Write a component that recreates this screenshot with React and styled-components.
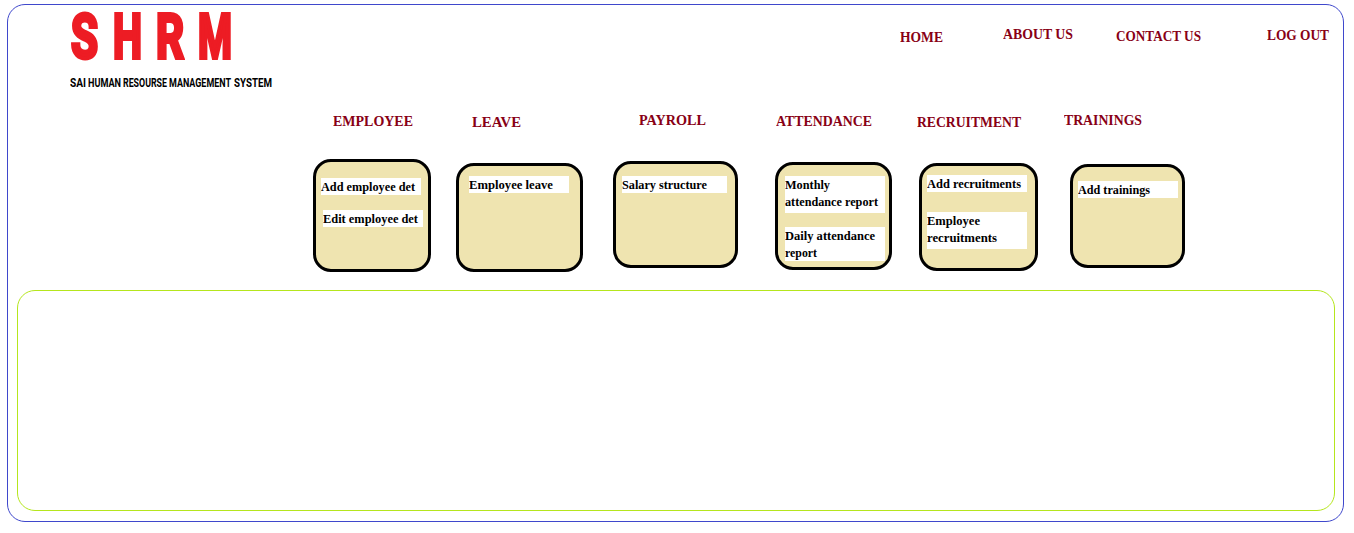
import React, { useLayoutEffect, useRef } from "react";
import styled, { createGlobalStyle } from "styled-components";

const GlobalStyle = createGlobalStyle`
  * { box-sizing: border-box; }
  body { margin: 0; background: #fff; overflow: hidden; }
`;

const Page = styled.div`
  height: 533px;
  padding: 4px 10px 11px 7px;
`;

const Frame = styled.div`
  display: flex;
  flex-direction: column;
  width: 1337px;
  height: 518px;
  border: 1px solid #3f48cc;
  border-radius: 18px;
`;

const Header = styled.header`
  display: flex;
  flex: none;
  height: 108px;
`;

const Brand = styled.div`
  width: 820px;
  flex: none;
  padding-left: 62px;
`;

const Row = styled.div`
  display: flex;
`;

const Slot = styled.div`
  flex: none;
  width: ${(p) => p.$width}px;
  margin-left: ${(p) => p.$gap || 0}px;
  margin-top: ${(p) => p.$drop || 0}px;
`;

const Logo = styled(Row)`
  padding-left: 1px;
  height: 70px;
  font: bold 62px/64px Roboto, "Liberation Sans", sans-serif;
  color: #ed1c24;
  -webkit-text-stroke: 4px #ed1c24;
`;

const Tagline = styled(Row)`
  font: bold 13px/15px Roboto, "Liberation Sans", sans-serif;
  color: #000;
`;

const Nav = styled.nav`
  display: flex;
  padding-top: 21px;
  padding-left: 72px;
  font: bold 15px/17px "Liberation Serif", "Times New Roman", serif;
  color: #880015;
`;

const Modules = styled.main`
  display: flex;
  flex: none;
  height: 177px;
  padding-left: 305px;
`;

const Module = styled.section`
  flex: none;
  width: ${(p) => p.$width}px;
  margin-left: ${(p) => p.$gap}px;
`;

const Heading = styled.h2`
  margin: ${(p) => p.$drop}px 0 0 ${(p) => p.$indent}px;
  height: ${(p) => 46 - p.$drop}px;
  font: bold 15px/17px "Liberation Serif", "Times New Roman", serif;
  color: #880015;
`;

const Card = styled.div`
  height: ${(p) => p.$height}px;
  margin-top: ${(p) => p.$drop}px;
  padding-top: ${(p) => p.$pad}px;
  border: 3px solid #000;
  border-radius: 18px;
  background: #efe4b0;
`;

const Entry = styled.div`
  width: ${(p) => p.$width || 100}px;
  height: ${(p) => p.$height || 17}px;
  margin-left: ${(p) => p.$indent}px;
  margin-bottom: ${(p) => p.$after || 0}px;
  background: #fff;
  font: bold 13px/17px "Liberation Serif", "Times New Roman", serif;
  color: #000;
`;

const Content = styled.div`
  flex: none;
  width: 1318px;
  height: 221px;
  margin-left: 9px;
  border: 1px solid #b5e61d;
  border-radius: 18px;
`;

const Line = styled.span`
  display: block;
  width: max-content;
  white-space: nowrap;
  transform-origin: 0 0;
`;

// Condenses a line of text to the given width.
function Fit({ width, children }) {
  const ref = useRef(null);
  useLayoutEffect(() => {
    const el = ref.current;
    el.style.transform = "none";
    el.style.transform = `scaleX(${width / el.getBoundingClientRect().width})`;
  }, [width, children]);
  return <Line ref={ref}>{children}</Line>;
}

const letters = [
  { text: "S", width: 27, gap: 0 },
  { text: "H", width: 29, gap: 15 },
  { text: "R", width: 28, gap: 14 },
  { text: "M", width: 34, gap: 14 },
];

const words = [
  { text: "SAI", width: 16, gap: 0 },
  { text: "HUMAN", width: 33, gap: 2 },
  { text: "RESOURSE", width: 44, gap: 2 },
  { text: "MANAGEMENT", width: 62, gap: 2 },
  { text: "SYSTEM", width: 38, gap: 3 },
];

const links = [
  { text: "HOME", width: 43, gap: 0, drop: 3 },
  { text: "ABOUT US", width: 70, gap: 60, drop: 0 },
  { text: "CONTACT US", width: 85, gap: 43, drop: 2 },
  { text: "LOG OUT", width: 62, gap: 66, drop: 1 },
];

const modules = [
  {
    title: "EMPLOYEE", titleWidth: 80, indent: 20, titleDrop: 0, gap: 0, width: 118, drop: 0, height: 113, pad: 16,
    entries: [
      { indent: 5, after: 15, lines: [["Add employee det", 94]] },
      { indent: 7, lines: [["Edit employee det", 95]] },
    ],
  },
  {
    title: "LEAVE", titleWidth: 49, indent: 16, titleDrop: 1, gap: 25, width: 127, drop: 4, height: 109, pad: 10,
    entries: [{ indent: 10, lines: [["Employee leave", 84]] }],
  },
  {
    title: "PAYROLL", titleWidth: 67, indent: 26, titleDrop: -1, gap: 30, width: 125, drop: 2, height: 107, pad: 12,
    entries: [{ indent: 6, width: 105, lines: [["Salary structure", 85]] }],
  },
  {
    title: "ATTENDANCE", titleWidth: 96, indent: 1, titleDrop: 0, gap: 37, width: 117, drop: 3, height: 108, pad: 11,
    entries: [
      { indent: 7, height: 37, after: 14, lines: [["Monthly", 45], ["attendance report", 93]] },
      { indent: 7, height: 34, lines: [["Daily attendance", 90], ["report", 32]] },
    ],
  },
  {
    title: "RECRUITMENT", titleWidth: 104, indent: -2, titleDrop: 1, gap: 27, width: 119, drop: 4, height: 108, pad: 9,
    entries: [
      { indent: 5, after: 20, lines: [["Add recruitments", 94]] },
      { indent: 5, height: 37, lines: [["Employee", 53], ["recruitments", 70]] },
    ],
  },
  {
    title: "TRAININGS", titleWidth: 78, indent: -6, titleDrop: -1, gap: 32, width: 115, drop: 5, height: 104, pad: 14,
    entries: [{ indent: 5, lines: [["Add trainings", 72]] }],
  },
];

const renderSlots = (items) =>
  items.map((i) => (
    <Slot key={i.text} $width={i.width} $gap={i.gap} $drop={i.drop}>
      <Fit width={i.width}>{i.text}</Fit>
    </Slot>
  ));

export default function App() {
  return (
    <Page>
      <GlobalStyle />
      <Frame>
        <Header>
          <Brand>
            <Logo>{renderSlots(letters)}</Logo>
            <Tagline>{renderSlots(words)}</Tagline>
          </Brand>
          <Nav>{renderSlots(links)}</Nav>
        </Header>
        <Modules>
          {modules.map((m) => (
            <Module key={m.title} $width={m.width} $gap={m.gap}>
              <Heading $indent={m.indent} $drop={m.titleDrop}>
                <Fit width={m.titleWidth}>{m.title}</Fit>
              </Heading>
              <Card $height={m.height} $drop={m.drop} $pad={m.pad}>
                {m.entries.map((e) => (
                  <Entry key={e.lines[0][0]} $indent={e.indent} $width={e.width} $height={e.height} $after={e.after}>
                    {e.lines.map(([text, width]) => (
                      <Fit key={text} width={width}>{text}</Fit>
                    ))}
                  </Entry>
                ))}
              </Card>
            </Module>
          ))}
        </Modules>
        <Content />
      </Frame>
    </Page>
  );
}
